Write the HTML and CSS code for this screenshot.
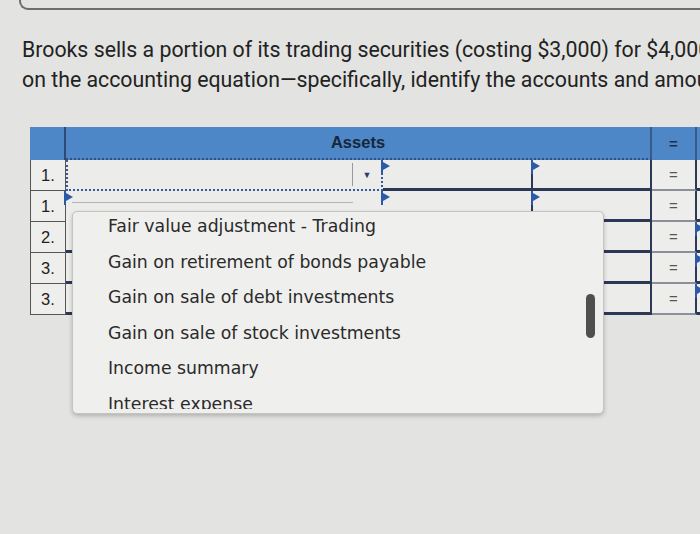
FILE: index.html
```html
<!DOCTYPE html>
<html>
<head>
<meta charset="utf-8">
<link rel="stylesheet" href="styles.css">
</head>
<body>
<div class="topbox"></div>
<p class="question">Brooks sells a portion of its trading securities (costing $3,000) for $4,000<br>on the accounting equation—specifically, identify the accounts and amounts</p>

<div class="sheet">
  <div class="hd hd-num"></div>
  <div class="hd hd-assets">Assets</div>
  <div class="hd hd-eq">=</div>
  <div class="hd hd-more"></div>

  <div class="num">1.</div>
  <div class="cell c1 focus"><span class="sel"></span><span class="caret">&#9660;</span></div>
  <div class="cell c2 flag"></div>
  <div class="cell c3 flag"></div>
  <div class="eq">=</div>
  <div class="cell more"></div>

  <div class="num">1.</div>
  <div class="cell c1 flag combo"><span class="combo-line"></span></div>
  <div class="cell c2 flag"></div>
  <div class="cell c3 flag"></div>
  <div class="eq">=</div>
  <div class="cell more"></div>

  <div class="num">2.</div>
  <div class="cell c1"></div>
  <div class="cell c2"></div>
  <div class="cell c3"></div>
  <div class="eq">=</div>
  <div class="cell more flag"></div>

  <div class="num">3.</div>
  <div class="cell c1"></div>
  <div class="cell c2"></div>
  <div class="cell c3"></div>
  <div class="eq">=</div>
  <div class="cell more flag"></div>

  <div class="num">3.</div>
  <div class="cell c1"></div>
  <div class="cell c2"></div>
  <div class="cell c3"></div>
  <div class="eq">=</div>
  <div class="cell more flag"></div>
</div>

<div class="menu">
  <div class="list">
    <ul>
      <li>Fair value adjustment - Trading</li>
      <li>Gain on retirement of bonds payable</li>
      <li>Gain on sale of debt investments</li>
      <li>Gain on sale of stock investments</li>
      <li>Income summary</li>
      <li>Interest expense</li>
    </ul>
  </div>
  <div class="thumb"></div>
</div>
</body>
</html>
```

FILE: styles.css
```css
html, body {
  margin: 0;
  padding: 0;
}
body {
  width: 700px;
  height: 534px;
  overflow: hidden;
  position: relative;
  background: #e3e3e1;
  font-family: "Liberation Sans", Arial, sans-serif;
  color: #1e1e1e;
}
.topbox {
  height: 8px;
  margin-left: 19px;
  margin-right: -20px;
  border-left: 2px solid #6e6e6e;
  border-bottom: 2px solid #6e6e6e;
  border-bottom-left-radius: 9px;
}
.question {
  margin: 25px 0 0 0;
  padding-left: 22px;
  font-family: Roboto, "Liberation Sans", sans-serif;
  font-size: 21.3px;
  line-height: 30px;
  white-space: nowrap;
  overflow: hidden;
  color: #222;
}
.sheet {
  display: grid;
  grid-template-columns: 36px 317px 150px 119px 45px 60px;
  grid-template-rows: 33px repeat(5, 31px);
  margin: 32px 0 0 30px;
  width: 800px;
}
.hd {
  background: #4d87c7;
  color: #17263a;
  font-weight: bold;
  font-size: 16.5px;
  display: flex;
  align-items: center;
  justify-content: center;
}
.hd-num {
  border-right: 2px solid #2e4a72;
}
.hd-assets {
  grid-column: 2 / 5;
  border-bottom: 2px dotted #2f4f86;
  border-right: 2px solid #3a5a8a;
}
.hd-eq {
  font-size: 15px;
  color: #1d2d4d;
  border-right: 2px solid #3a5a8a;
}
.num {
  background: #eeeeec;
  border: 1px solid #555;
  border-top: none;
  font-size: 16.5px;
  display: flex;
  align-items: center;
  padding-left: 10px;
  color: #222;
}
.cell {
  position: relative;
  background: #ececea;
  border-right: 2px solid #2c3856;
  border-bottom: 3px solid #2c3856;
}
.eq {
  background: #ededeb;
  border-bottom: 2px solid #8a8f98;
  border-right: 2px solid #2c3856;
  display: flex;
  align-items: center;
  justify-content: center;
  color: #555;
  font-size: 15px;
}
.focus {
  border: 2px dotted #3a5a94;
  border-top: none;
  display: flex;
  justify-content: flex-end;
  align-items: center;
}
.sel {
  width: 1px;
  align-self: stretch;
  margin: 3px 0;
  background: #9a9a9a;
}
.caret {
  width: 28px;
  text-align: center;
  font-size: 9px;
  color: #2a3f6e;
}
.flag::before {
  content: "";
  position: absolute;
  left: -2px;
  top: 0;
  width: 2px;
  height: 14px;
  background: #2d5aa6;
}
.flag::after {
  content: "";
  position: absolute;
  left: 0;
  top: 2px;
  border-left: 7px solid #2d5aa6;
  border-top: 4px solid transparent;
  border-bottom: 4px solid transparent;
}
.combo {
  border-bottom: none;
  border-right: none;
}
.combo-line {
  position: absolute;
  left: 6px;
  right: 30px;
  top: 11px;
  height: 1px;
  background: #b4b4b4;
}
.menu {
  position: absolute;
  left: 72px;
  top: 211px;
  width: 530px;
  height: 201px;
  background: #efefed;
  border: 1px solid #c4c4c2;
  border-radius: 5px;
  box-shadow: 0 2px 4px rgba(0, 0, 0, 0.22);
  overflow: hidden;
}
.list {
  height: 197px;
  overflow: hidden;
}
.menu ul {
  list-style: none;
  margin: -3px 0 0 0;
  padding: 0 0 0 35px;
  font-family: "DejaVu Sans", Verdana, sans-serif;
  font-size: 17.3px;
  line-height: 35.6px;
  color: #2a2a2a;
}
.thumb {
  position: absolute;
  right: 8px;
  top: 82px;
  width: 9px;
  height: 44px;
  border-radius: 5px;
  background: #4f4f4f;
}
```
